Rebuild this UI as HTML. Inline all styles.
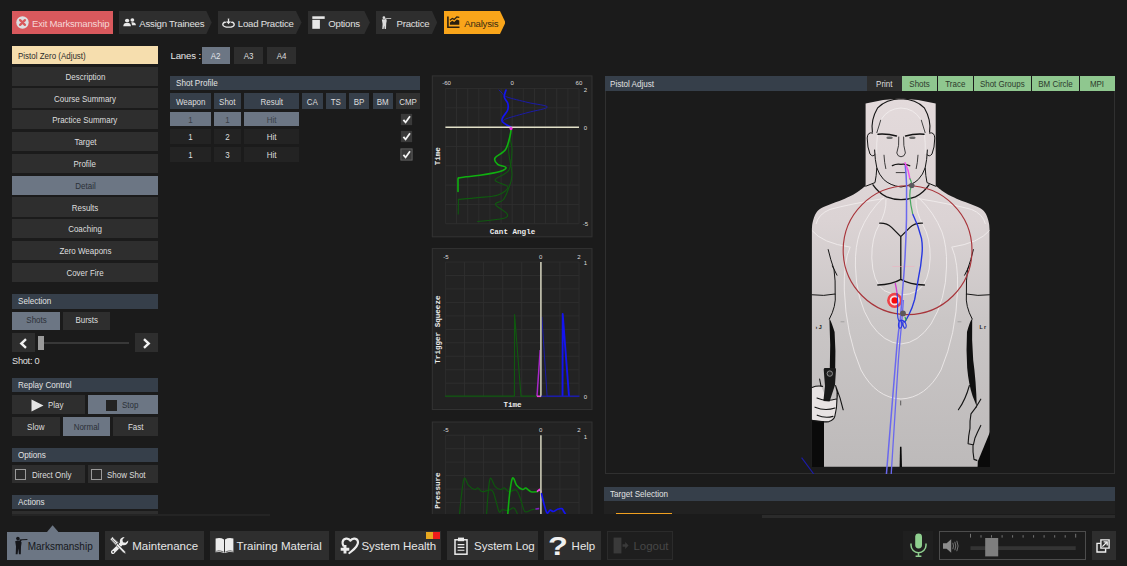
<!DOCTYPE html><html><head><meta charset="utf-8"><title>Marksmanship Analysis</title><style>
*{box-sizing:border-box;margin:0;padding:0}
html,body{width:1127px;height:566px;overflow:hidden;background:#1b1b1b;font-family:"Liberation Sans",sans-serif;color:#e0e0e0}
.a{position:absolute}
.b{position:absolute;padding-top:1.4px;background:#2e2e2e;color:#dedede;font-size:9px;display:flex;align-items:center;justify-content:center;white-space:nowrap;letter-spacing:0}
.sel{background:#6c7684;color:#2b3037}
.h{position:absolute;padding-bottom:1px;background:#363f4a;color:#e2e2e2;font-size:9.8px;display:flex;align-items:center;padding-left:5.6px;white-space:nowrap;letter-spacing:0}
.nav{position:absolute;top:11px;height:23px;background:#2e2e2e;color:#e0e0e0;font-size:9.6px;display:flex;align-items:center;white-space:nowrap;letter-spacing:-0.22px}
.g{position:absolute;padding-top:0.4px;background:#8fc78f;color:#2c3a2c;font-size:9px;display:flex;align-items:center;justify-content:center;white-space:nowrap;letter-spacing:0}
.bb{position:absolute;top:531.2px;height:28.5px;background:#2e2e2e;color:#e6e6e6;font-size:11.5px;display:flex;align-items:center;white-space:nowrap;letter-spacing:0px}
.t{display:inline-block;transform:scaleX(.885);transform-origin:50% 50%}
.tl{display:inline-block;transform:scaleX(.885);transform-origin:0 50%}
.h .t{transform:scaleX(.825);transform-origin:0 50%}
.mono{font-family:"Liberation Mono",monospace}
</style></head><body>
<div class="nav" style="left:12.0px;width:101.0px;background:#d9595d;color:#f6d6d6;"><svg class="a" style="left:4px;top:5px" width="13" height="13" viewBox="0 0 13 13"><circle cx="6.5" cy="6.5" r="6.2" fill="#dddfe2"/><path d="M4.1 4.1l4.8 4.8M8.9 4.1l-4.8 4.8" stroke="#d9595d" stroke-width="2.3" stroke-linecap="round"/></svg><span class="a" style="left:20.0px;margin-top:1.6px">Exit Marksmanship</span></div>
<div class="nav" style="left:119.0px;width:92.7px;background:#2e2e2e;color:#e0e0e0;clip-path:polygon(0 0,94.28% 0,100% 50%,94.28% 100%,0 100%);"><svg class="a" style="left:4px;top:7.2px" width="13.4" height="9.2" viewBox="0 0 14 11" preserveAspectRatio="none"><circle cx="4.3" cy="3" r="2.2" fill="#e8e8e8"/><path d="M0.3 10c0-3 1.6-4.3 4-4.3s4 1.3 4 4.3z" fill="#e8e8e8"/><circle cx="9.8" cy="2.4" r="2" fill="#e8e8e8"/><path d="M8.6 5.2c3-0.6 4.9 0.8 4.9 3.6h-4.2c0-1.5-0.2-2.6-0.7-3.6z" fill="#e8e8e8"/></svg><span class="a" style="left:20.3px;margin-top:1.6px">Assign Trainees</span></div>
<div class="nav" style="left:217.7px;width:83.9px;background:#2e2e2e;color:#e0e0e0;clip-path:polygon(0 0,93.33% 0,100% 50%,93.33% 100%,0 100%);"><svg class="a" style="left:4px;top:7px" width="13" height="10" viewBox="0 0 13 10"><ellipse cx="6.5" cy="6.4" rx="5.7" ry="2.7" fill="none" stroke="#e8e8e8" stroke-width="1.4"/><path d="M5.5 0.2h2v3h2L6.5 6.6 3.5 3.2h2z" fill="#e8e8e8" stroke="#2e2e2e" stroke-width="0.7"/></svg><span class="a" style="left:20.1px;margin-top:1.6px">Load Practice</span></div>
<div class="nav" style="left:307.8px;width:62.1px;background:#2e2e2e;color:#e0e0e0;clip-path:polygon(0 0,91.14% 0,100% 50%,91.14% 100%,0 100%);"><svg class="a" style="left:4px;top:5px" width="14" height="13" viewBox="0 0 14 13"><rect x="0.3" y="0.3" width="12.4" height="2.6" fill="#e8e8e8"/><rect x="0.3" y="3.8" width="7.6" height="9" fill="#e8e8e8"/></svg><span class="a" style="left:20.5px;margin-top:1.6px">Options</span></div>
<div class="nav" style="left:375.7px;width:61.5px;background:#2e2e2e;color:#e0e0e0;clip-path:polygon(0 0,91.54% 0,100% 50%,91.54% 100%,0 100%);"><svg class="a" style="left:5.2px;top:5px" width="11" height="13.4" viewBox="0 0 11 13.4"><circle cx="2.9" cy="1.7" r="1.35" fill="#dcdcdc"/><path d="M0.8 3.6Q2.8 2.8 4.8 3.4l1 1.2-0.6 3-0.2 5.6H3.6L3.2 9.4 2.6 13.2H1.2L1.6 8z" fill="#dcdcdc"/><path d="M3.6 2.4l2-0.2 4.6-0.1v0.7L5.8 3 4.6 4.4z" fill="#dcdcdc"/></svg><span class="a" style="left:20.8px;margin-top:1.6px">Practice</span></div>
<div class="nav" style="left:443.9px;width:61.6px;background:#f9a51a;color:#3a2c12;clip-path:polygon(0 0,91.07% 0,100% 50%,91.07% 100%,0 100%);"><svg class="a" style="left:3.6px;top:5.4px" width="13" height="12.4" viewBox="0 0 13 12.4"><path d="M0.9 0.4v10.9h11.6" fill="none" stroke="#2a2010" stroke-width="1.6"/><path d="M2.9 8.8V6.6l2.4-1.8 1.9 1.2 2.7-2.6 2.4 1v4.4z" fill="#2a2010"/><path d="M2.9 4.2l2.4-1.8 1.9 1 2.6-2.4 2.5 0.4" fill="none" stroke="#2a2010" stroke-width="1.2"/></svg><span class="a" style="left:20.4px;margin-top:1.6px">Analysis</span></div>
<div class="b" style="left:12.0px;top:46.0px;width:146.4px;height:18.2px;background:#f6deae;color:#2a2a2a;justify-content:flex-start;padding-left:5.5px"><span class="tl">Pistol Zero (Adjust)</span></div>
<div class="b" style="left:12.0px;top:66.6px;width:146.4px;height:19.2px;"><span class="t">Description</span></div>
<div class="b" style="left:12.0px;top:88.4px;width:146.4px;height:19.2px;"><span class="t">Course Summary</span></div>
<div class="b" style="left:12.0px;top:110.2px;width:146.4px;height:19.2px;"><span class="t">Practice Summary</span></div>
<div class="b" style="left:12.0px;top:132.0px;width:146.4px;height:19.2px;"><span class="t">Target</span></div>
<div class="b" style="left:12.0px;top:153.8px;width:146.4px;height:19.2px;"><span class="t">Profile</span></div>
<div class="b sel" style="left:12.0px;top:175.6px;width:146.4px;height:19.2px;"><span class="t">Detail</span></div>
<div class="b" style="left:12.0px;top:197.4px;width:146.4px;height:19.2px;"><span class="t">Results</span></div>
<div class="b" style="left:12.0px;top:219.2px;width:146.4px;height:19.2px;"><span class="t">Coaching</span></div>
<div class="b" style="left:12.0px;top:241.0px;width:146.4px;height:19.2px;"><span class="t">Zero Weapons</span></div>
<div class="b" style="left:12.0px;top:262.8px;width:146.4px;height:19.2px;"><span class="t">Cover Fire</span></div>
<div class="h" style="left:12.0px;top:294.2px;width:146.4px;height:14.6px;"><span class="t">Selection</span></div>
<div class="b sel" style="left:12.0px;top:311.9px;width:48.4px;height:18.2px;padding-top:0;padding-bottom:1px"><span class="t">Shots</span></div>
<div class="b" style="left:63.0px;top:311.9px;width:46.8px;height:18.2px;padding-top:0;padding-bottom:1px"><span class="t">Bursts</span></div>
<div class="b" style="left:12.0px;top:333.2px;width:23.0px;height:18.8px;"><svg width="9" height="11" viewBox="0 0 9 11"><path d="M7 1.2L2.3 5.5 7 9.8" fill="none" stroke="#f0f0f0" stroke-width="2.4"/></svg></div>
<div class="b" style="left:135.4px;top:333.2px;width:23.0px;height:18.8px;"><svg width="9" height="11" viewBox="0 0 9 11"><path d="M2 1.2l4.7 4.3L2 9.8" fill="none" stroke="#f0f0f0" stroke-width="2.4"/></svg></div>
<div class="a" style="left:38.0px;top:342.0px;width:91.0px;height:2.0px;background:#383838"></div>
<div class="a" style="left:38.3px;top:335.5px;width:6.2px;height:14.5px;background:#9a9a9a"></div>
<div class="a" style="left:12px;top:356px;font-size:9.2px;color:#e0e0e0;letter-spacing:-0.25px">Shot: 0</div>
<div class="h" style="left:12.0px;top:377.6px;width:146.4px;height:14.6px;"><span class="t">Replay Control</span></div>
<div class="b" style="left:12.0px;top:395.0px;width:73.2px;height:19.2px;"><svg width="13" height="13" viewBox="0 0 13 13" style="margin-right:4px"><path d="M0.5 0.5l12 6-12 6z" fill="#e6e6e6"/></svg><span class="tl">Play</span></div>
<div class="b sel" style="left:87.8px;top:395.0px;width:70.6px;height:19.2px;"><span style="display:inline-block;width:11.5px;height:11.5px;background:#232323;margin-right:4.5px"></span><span class="tl">Stop</span></div>
<div class="b" style="left:12.0px;top:417.3px;width:48.4px;height:18.8px;"><span class="t">Slow</span></div>
<div class="b sel" style="left:63.0px;top:417.3px;width:47.0px;height:18.8px;"><span class="t">Normal</span></div>
<div class="b" style="left:112.6px;top:417.3px;width:45.8px;height:18.8px;"><span class="t">Fast</span></div>
<div class="h" style="left:12.0px;top:448.2px;width:146.4px;height:14.2px;"><span class="t">Options</span></div>
<div class="b" style="left:12.0px;top:464.7px;width:73.2px;height:18.3px;justify-content:flex-start;padding-left:2.8px"><span style="display:inline-block;width:11.4px;height:11.4px;border:1px solid #9a9a9a;background:#2a2a2a;margin-right:5.5px"></span><span class="tl">Direct Only</span></div>
<div class="b" style="left:87.8px;top:464.7px;width:70.6px;height:18.3px;justify-content:flex-start;padding-left:2.8px"><span style="display:inline-block;width:11.4px;height:11.4px;border:1px solid #9a9a9a;background:#2a2a2a;margin-right:5.5px"></span><span class="tl">Show Shot</span></div>
<div class="h" style="left:12.0px;top:494.6px;width:146.4px;height:14.2px;"><span class="t">Actions</span></div>
<div class="b" style="left:12.0px;top:511.4px;width:146.4px;height:2.6px;"></div>
<div class="a" style="left:12.0px;top:513.6px;width:258.0px;height:2.0px;background:#242424"></div>
<div class="a" style="left:170.4px;top:49.6px;font-size:9.6px;color:#e6e6e6;letter-spacing:-0.1px">Lanes :</div>
<div class="b sel" style="left:201.7px;top:46.7px;width:28.6px;height:17.0px;color:#e0e4ea"><span class="t">A2</span></div>
<div class="b" style="left:233.8px;top:46.7px;width:29.6px;height:17.0px;"><span class="t">A3</span></div>
<div class="b" style="left:266.6px;top:46.7px;width:29.1px;height:17.0px;"><span class="t">A4</span></div>
<div class="h" style="left:170.2px;top:76.3px;width:250.0px;height:13.5px;"><span class="t">Shot Profile</span></div>
<div class="b" style="left:170.2px;top:92.9px;width:41.0px;height:15.9px;background:#363f4a"><span class="t">Weapon</span></div>
<div class="b" style="left:214.2px;top:92.9px;width:26.5px;height:15.9px;background:#363f4a"><span class="t">Shot</span></div>
<div class="b" style="left:243.7px;top:92.9px;width:55.4px;height:15.9px;background:#363f4a"><span class="t">Result</span></div>
<div class="b" style="left:302.1px;top:92.9px;width:20.6px;height:15.9px;background:#363f4a"><span class="t">CA</span></div>
<div class="b" style="left:326.0px;top:92.9px;width:20.0px;height:15.9px;background:#363f4a"><span class="t">TS</span></div>
<div class="b" style="left:349.0px;top:92.9px;width:20.4px;height:15.9px;background:#363f4a"><span class="t">BP</span></div>
<div class="b" style="left:372.7px;top:92.9px;width:20.3px;height:15.9px;background:#363f4a"><span class="t">BM</span></div>
<div class="b" style="left:396.0px;top:92.9px;width:24.2px;height:15.9px;background:#303030"><span class="t">CMP</span></div>
<div class="b sel" style="left:170.2px;top:111.7px;width:41.0px;height:14.4px;color:#3a4048"><span class="t">1</span></div>
<div class="b sel" style="left:214.2px;top:111.7px;width:26.5px;height:14.4px;color:#3a4048"><span class="t">1</span></div>
<div class="b sel" style="left:243.7px;top:111.7px;width:55.4px;height:14.4px;color:#3a4048"><span class="t">Hit</span></div>
<div class="a" style="left:400px;top:112.6px;width:13px;height:13px;line-height:0"><svg width="13" height="13" viewBox="0 0 13 13"><rect x="0.9" y="0.9" width="11.2" height="11.2" fill="#3a3a3a" stroke="none" stroke-width="0"/><path d="M3.4 6.8l2.2 2.6 4.4-6.2" fill="none" stroke="#f4f4f4" stroke-width="1.8"/></svg></div>
<div class="b" style="left:170.2px;top:129.4px;width:41.0px;height:14.4px;background:#232323"><span class="t">1</span></div>
<div class="b" style="left:214.2px;top:129.4px;width:26.5px;height:14.4px;background:#232323"><span class="t">2</span></div>
<div class="b" style="left:243.7px;top:129.4px;width:55.4px;height:14.4px;background:#232323"><span class="t">Hit</span></div>
<div class="a" style="left:400px;top:130.3px;width:13px;height:13px;line-height:0"><svg width="13" height="13" viewBox="0 0 13 13"><rect x="0.9" y="0.9" width="11.2" height="11.2" fill="#3a3a3a" stroke="none" stroke-width="0"/><path d="M3.4 6.8l2.2 2.6 4.4-6.2" fill="none" stroke="#f4f4f4" stroke-width="1.8"/></svg></div>
<div class="b" style="left:170.2px;top:147.2px;width:41.0px;height:14.4px;background:#232323"><span class="t">1</span></div>
<div class="b" style="left:214.2px;top:147.2px;width:26.5px;height:14.4px;background:#232323"><span class="t">3</span></div>
<div class="b" style="left:243.7px;top:147.2px;width:55.4px;height:14.4px;background:#232323"><span class="t">Hit</span></div>
<div class="a" style="left:400px;top:148.1px;width:13px;height:13px;line-height:0"><svg width="13" height="13" viewBox="0 0 13 13"><rect x="0.9" y="0.9" width="11.2" height="11.2" fill="#3a3a3a" stroke="#606060" stroke-width="1"/><path d="M3.4 6.8l2.2 2.6 4.4-6.2" fill="none" stroke="#f4f4f4" stroke-width="1.8"/></svg></div>
<svg class="a" style="left:0;top:0" width="1127" height="514.2" viewBox="0 0 1127 514.2"><rect x="432.3" y="75.9" width="159.7" height="160.9" fill="#222222" stroke="#333333" stroke-width="1"/><rect x="445.4" y="88.5" width="133.60000000000002" height="135.2" fill="#232323"/><line x1="445.4" y1="88.5" x2="445.4" y2="223.7" stroke="#2f2f2f" stroke-width="0.9"/><line x1="456.5" y1="88.5" x2="456.5" y2="223.7" stroke="#2f2f2f" stroke-width="0.9"/><line x1="467.7" y1="88.5" x2="467.7" y2="223.7" stroke="#2f2f2f" stroke-width="0.9"/><line x1="478.8" y1="88.5" x2="478.8" y2="223.7" stroke="#2f2f2f" stroke-width="0.9"/><line x1="489.9" y1="88.5" x2="489.9" y2="223.7" stroke="#2f2f2f" stroke-width="0.9"/><line x1="501.1" y1="88.5" x2="501.1" y2="223.7" stroke="#2f2f2f" stroke-width="0.9"/><line x1="512.2" y1="88.5" x2="512.2" y2="223.7" stroke="#2f2f2f" stroke-width="0.9"/><line x1="523.3" y1="88.5" x2="523.3" y2="223.7" stroke="#2f2f2f" stroke-width="0.9"/><line x1="534.5" y1="88.5" x2="534.5" y2="223.7" stroke="#2f2f2f" stroke-width="0.9"/><line x1="545.6" y1="88.5" x2="545.6" y2="223.7" stroke="#2f2f2f" stroke-width="0.9"/><line x1="556.7" y1="88.5" x2="556.7" y2="223.7" stroke="#2f2f2f" stroke-width="0.9"/><line x1="567.9" y1="88.5" x2="567.9" y2="223.7" stroke="#2f2f2f" stroke-width="0.9"/><line x1="579.0" y1="88.5" x2="579.0" y2="223.7" stroke="#2f2f2f" stroke-width="0.9"/><line x1="445.4" y1="88.5" x2="579.0" y2="88.5" stroke="#2f2f2f" stroke-width="0.9"/><line x1="445.4" y1="107.8" x2="579.0" y2="107.8" stroke="#2f2f2f" stroke-width="0.9"/><line x1="445.4" y1="127.1" x2="579.0" y2="127.1" stroke="#2f2f2f" stroke-width="0.9"/><line x1="445.4" y1="146.4" x2="579.0" y2="146.4" stroke="#2f2f2f" stroke-width="0.9"/><line x1="445.4" y1="165.7" x2="579.0" y2="165.7" stroke="#2f2f2f" stroke-width="0.9"/><line x1="445.4" y1="185.1" x2="579.0" y2="185.1" stroke="#2f2f2f" stroke-width="0.9"/><line x1="445.4" y1="204.4" x2="579.0" y2="204.4" stroke="#2f2f2f" stroke-width="0.9"/><line x1="445.4" y1="223.7" x2="579.0" y2="223.7" stroke="#2f2f2f" stroke-width="0.9"/><text x="446.6" y="85.2" font-size="6.1" fill="#dcdcdc" text-anchor="middle" font-family="Liberation Sans">-60</text><text x="512.2" y="85.2" font-size="6.1" fill="#dcdcdc" text-anchor="middle" font-family="Liberation Sans">0</text><text x="579" y="85.2" font-size="6.1" fill="#dcdcdc" text-anchor="middle" font-family="Liberation Sans">60</text><text x="585.5" y="91.8" font-size="6.1" fill="#dcdcdc" text-anchor="middle" font-family="Liberation Sans">2</text><text x="585.5" y="130" font-size="6.1" fill="#dcdcdc" text-anchor="middle" font-family="Liberation Sans">0</text><text x="585.5" y="226" font-size="6.1" fill="#dcdcdc" text-anchor="middle" font-family="Liberation Sans">-5</text><text x="440.3" y="156.2" font-size="7.6" font-weight="bold" fill="#ececec" text-anchor="middle" font-family="Liberation Mono" transform="rotate(-90 440.3 156.2)">Time</text><text x="512.5" y="234.4" font-size="7.6" font-weight="bold" fill="#ececec" text-anchor="middle" font-family="Liberation Mono">Cant Angle</text><path d="M511.0 130.0 C510.9 131.7 510.3 136.7 510.5 140.0 C510.7 143.3 512.2 145.0 512.0 150.0 C511.8 155.0 511.8 165.0 509.0 170.0 C506.2 175.0 495.2 177.2 495.0 180.0 C494.8 182.8 507.5 184.5 508.0 187.0 C508.5 189.5 503.0 193.2 498.0 195.0 C493.0 196.8 484.6 196.9 478.0 197.6 C471.4 198.3 461.7 199.1 458.4 199.4" fill="none" stroke="#0f5a0f" stroke-width="1.1" stroke-linejoin="round" stroke-linecap="round" /><path d="M458.4 199.4 L458.2 214.0" fill="none" stroke="#0f5a0f" stroke-width="1.1" stroke-linejoin="round" stroke-linecap="round" /><path d="M511.0 130.0 C510.6 133.3 508.3 142.5 508.5 150.0 C508.7 157.5 512.1 168.3 512.0 175.0 C511.9 181.7 509.5 185.8 508.0 190.0 C506.5 194.2 505.1 197.6 503.0 200.0 C500.9 202.4 494.8 202.2 495.5 204.5 C496.2 206.8 505.8 211.5 507.0 213.8 C508.2 216.1 507.9 217.2 503.0 218.5 C498.1 219.8 481.8 221.0 477.6 221.5" fill="none" stroke="#0f5a0f" stroke-width="1.1" stroke-linejoin="round" stroke-linecap="round" /><path d="M499.0 90.0 C499.5 90.5 500.7 91.8 502.0 93.0 C503.3 94.2 502.7 95.4 507.0 97.0 C511.3 98.6 521.2 100.8 528.0 102.5 C534.8 104.2 547.5 105.3 547.5 107.0 C547.5 108.7 534.8 110.6 528.0 112.5 C521.2 114.4 511.3 116.9 507.0 118.5 C502.7 120.1 502.8 121.4 502.0 122.0" fill="none" stroke="#1a1aa8" stroke-width="1.0" stroke-linejoin="round" stroke-linecap="round" /><path d="M506.0 90.0 C505.7 91.2 504.0 94.8 504.3 97.0 C504.6 99.2 507.2 101.2 507.8 103.4 C508.4 105.6 508.4 107.9 507.6 110.2 C506.8 112.5 503.9 115.2 503.0 117.0 C502.1 118.8 501.5 119.8 502.0 121.0 C502.5 122.2 504.5 123.5 506.0 124.5 C507.5 125.5 510.2 126.6 511.0 127.0" fill="none" stroke="#1414f0" stroke-width="1.7" stroke-linejoin="round" stroke-linecap="round" /><line x1="445.4" y1="127.3" x2="579.0" y2="127.3" stroke="#e2e0c8" stroke-width="1.5"/><path d="M511.0 130.0 C510.8 131.0 510.9 132.7 510.0 136.0 C509.1 139.3 507.9 146.1 505.4 149.8 C502.9 153.5 496.3 155.6 495.0 158.0 C493.7 160.4 495.9 162.7 497.7 164.3 C499.5 165.9 505.6 166.2 506.0 167.4 C506.4 168.6 504.3 170.2 500.0 171.5 C495.7 172.8 485.7 174.4 480.0 175.3 C474.3 176.2 469.6 176.4 466.0 176.8 C462.4 177.2 459.7 177.8 458.4 178.0" fill="none" stroke="#10b010" stroke-width="1.6" stroke-linejoin="round" stroke-linecap="round" /><path d="M458.4 178.0 L458.0 179.0 L458.0 191.5" fill="none" stroke="#10b010" stroke-width="1.6" stroke-linejoin="round" stroke-linecap="round" /><circle cx="511" cy="128.6" r="1.6" fill="#f030e0"/><rect x="432.3" y="248.6" width="159.7" height="160.9" fill="#222222" stroke="#333333" stroke-width="1"/><rect x="445.4" y="262" width="133.60000000000002" height="134.7" fill="#232323"/><line x1="445.4" y1="262" x2="445.4" y2="396.7" stroke="#2f2f2f" stroke-width="0.9"/><line x1="464.5" y1="262" x2="464.5" y2="396.7" stroke="#2f2f2f" stroke-width="0.9"/><line x1="483.6" y1="262" x2="483.6" y2="396.7" stroke="#2f2f2f" stroke-width="0.9"/><line x1="502.7" y1="262" x2="502.7" y2="396.7" stroke="#2f2f2f" stroke-width="0.9"/><line x1="521.7" y1="262" x2="521.7" y2="396.7" stroke="#2f2f2f" stroke-width="0.9"/><line x1="540.8" y1="262" x2="540.8" y2="396.7" stroke="#2f2f2f" stroke-width="0.9"/><line x1="559.9" y1="262" x2="559.9" y2="396.7" stroke="#2f2f2f" stroke-width="0.9"/><line x1="579.0" y1="262" x2="579.0" y2="396.7" stroke="#2f2f2f" stroke-width="0.9"/><line x1="445.4" y1="262.0" x2="579.0" y2="262.0" stroke="#2f2f2f" stroke-width="0.9"/><line x1="445.4" y1="275.5" x2="579.0" y2="275.5" stroke="#2f2f2f" stroke-width="0.9"/><line x1="445.4" y1="288.9" x2="579.0" y2="288.9" stroke="#2f2f2f" stroke-width="0.9"/><line x1="445.4" y1="302.4" x2="579.0" y2="302.4" stroke="#2f2f2f" stroke-width="0.9"/><line x1="445.4" y1="315.9" x2="579.0" y2="315.9" stroke="#2f2f2f" stroke-width="0.9"/><line x1="445.4" y1="329.4" x2="579.0" y2="329.4" stroke="#2f2f2f" stroke-width="0.9"/><line x1="445.4" y1="342.8" x2="579.0" y2="342.8" stroke="#2f2f2f" stroke-width="0.9"/><line x1="445.4" y1="356.3" x2="579.0" y2="356.3" stroke="#2f2f2f" stroke-width="0.9"/><line x1="445.4" y1="369.8" x2="579.0" y2="369.8" stroke="#2f2f2f" stroke-width="0.9"/><line x1="445.4" y1="383.2" x2="579.0" y2="383.2" stroke="#2f2f2f" stroke-width="0.9"/><line x1="445.4" y1="396.7" x2="579.0" y2="396.7" stroke="#2f2f2f" stroke-width="0.9"/><text x="446" y="258.8" font-size="6.1" fill="#dcdcdc" text-anchor="middle" font-family="Liberation Sans">-5</text><text x="540.8" y="258.8" font-size="6.1" fill="#dcdcdc" text-anchor="middle" font-family="Liberation Sans">0</text><text x="579" y="258.8" font-size="6.1" fill="#dcdcdc" text-anchor="middle" font-family="Liberation Sans">2</text><text x="585.5" y="265.5" font-size="6.1" fill="#dcdcdc" text-anchor="middle" font-family="Liberation Sans">1</text><text x="585.5" y="399" font-size="6.1" fill="#dcdcdc" text-anchor="middle" font-family="Liberation Sans">0</text><text x="440.3" y="329.6" font-size="7.6" font-weight="bold" fill="#ececec" text-anchor="middle" font-family="Liberation Mono" transform="rotate(-90 440.3 329.6)">Trigger Squeeze</text><text x="512.5" y="407.5" font-size="7.6" font-weight="bold" fill="#ececec" text-anchor="middle" font-family="Liberation Mono">Time</text><path d="M445.4 396.1 L514.4 396.1 L514.6 314.6 L521.0 396.1 L540.0 396.1" fill="none" stroke="#0f5a0f" stroke-width="1.1" stroke-linejoin="round" stroke-linecap="round" /><path d="M541.9 317.2 L547.1 396.2 L579.0 396.2" fill="none" stroke="#1a1aa8" stroke-width="1.0" stroke-linejoin="round" stroke-linecap="round" /><path d="M537 396.3L540.2 350" fill="none" stroke="#a828c8" stroke-width="1.5"/><path d="M537 396.3h4" stroke="#f040e0" stroke-width="1.6"/><line x1="540.9" y1="262" x2="540.9" y2="396.7" stroke="#c2c0ae" stroke-width="1.7"/><path d="M562.5 396.3L562.7 314 569 396.3" fill="none" stroke="#1414f0" stroke-width="1.9" stroke-linejoin="round"/><path d="M541.5 396.2 L579.0 396.2" fill="none" stroke="#1c1cb8" stroke-width="1.0" stroke-linejoin="round" stroke-linecap="round" /><rect x="432.3" y="422" width="159.7" height="160.9" fill="#222222" stroke="#333333" stroke-width="1"/><rect x="445.4" y="435.2" width="133.60000000000002" height="134.7" fill="#232323"/><line x1="445.4" y1="435.2" x2="445.4" y2="569.9" stroke="#2f2f2f" stroke-width="0.9"/><line x1="464.5" y1="435.2" x2="464.5" y2="569.9" stroke="#2f2f2f" stroke-width="0.9"/><line x1="483.6" y1="435.2" x2="483.6" y2="569.9" stroke="#2f2f2f" stroke-width="0.9"/><line x1="502.7" y1="435.2" x2="502.7" y2="569.9" stroke="#2f2f2f" stroke-width="0.9"/><line x1="521.7" y1="435.2" x2="521.7" y2="569.9" stroke="#2f2f2f" stroke-width="0.9"/><line x1="540.8" y1="435.2" x2="540.8" y2="569.9" stroke="#2f2f2f" stroke-width="0.9"/><line x1="559.9" y1="435.2" x2="559.9" y2="569.9" stroke="#2f2f2f" stroke-width="0.9"/><line x1="579.0" y1="435.2" x2="579.0" y2="569.9" stroke="#2f2f2f" stroke-width="0.9"/><line x1="445.4" y1="435.2" x2="579.0" y2="435.2" stroke="#2f2f2f" stroke-width="0.9"/><line x1="445.4" y1="448.7" x2="579.0" y2="448.7" stroke="#2f2f2f" stroke-width="0.9"/><line x1="445.4" y1="462.1" x2="579.0" y2="462.1" stroke="#2f2f2f" stroke-width="0.9"/><line x1="445.4" y1="475.6" x2="579.0" y2="475.6" stroke="#2f2f2f" stroke-width="0.9"/><line x1="445.4" y1="489.1" x2="579.0" y2="489.1" stroke="#2f2f2f" stroke-width="0.9"/><line x1="445.4" y1="502.6" x2="579.0" y2="502.6" stroke="#2f2f2f" stroke-width="0.9"/><line x1="445.4" y1="516.0" x2="579.0" y2="516.0" stroke="#2f2f2f" stroke-width="0.9"/><line x1="445.4" y1="529.5" x2="579.0" y2="529.5" stroke="#2f2f2f" stroke-width="0.9"/><line x1="445.4" y1="543.0" x2="579.0" y2="543.0" stroke="#2f2f2f" stroke-width="0.9"/><line x1="445.4" y1="556.4" x2="579.0" y2="556.4" stroke="#2f2f2f" stroke-width="0.9"/><line x1="445.4" y1="569.9" x2="579.0" y2="569.9" stroke="#2f2f2f" stroke-width="0.9"/><text x="446" y="432" font-size="6.1" fill="#dcdcdc" text-anchor="middle" font-family="Liberation Sans">-5</text><text x="540.8" y="432" font-size="6.1" fill="#dcdcdc" text-anchor="middle" font-family="Liberation Sans">0</text><text x="579" y="432" font-size="6.1" fill="#dcdcdc" text-anchor="middle" font-family="Liberation Sans">2</text><text x="585.5" y="438.7" font-size="6.1" fill="#dcdcdc" text-anchor="middle" font-family="Liberation Sans">1</text><text x="440.3" y="490.6" font-size="7.6" font-weight="bold" fill="#ececec" text-anchor="middle" font-family="Liberation Mono" transform="rotate(-90 440.3 490.6)">Pressure</text><path d="M459.4 515.0 C459.8 511.7 460.7 501.1 461.5 495.0 C462.3 488.9 463.0 479.9 464.2 478.3 C465.4 476.7 466.7 483.4 468.5 485.3 C470.3 487.2 473.3 489.1 474.9 489.5 C476.5 489.9 476.8 487.6 478.0 488.0 C479.2 488.4 480.0 491.3 482.3 491.7 C484.6 492.1 489.5 488.6 491.8 490.2 C494.1 491.8 494.8 497.6 496.0 501.2 C497.2 504.8 498.1 510.4 499.2 511.8 C500.3 513.2 500.9 509.9 502.4 509.7 C503.9 509.5 506.1 510.8 508.0 510.5 C509.9 510.2 512.3 507.1 514.0 508.0 C515.7 508.9 517.6 514.7 518.3 516.0" fill="none" stroke="#0e560e" stroke-width="1.2" stroke-linejoin="round" stroke-linecap="round" /><path d="M486.5 515.0 C486.8 511.7 487.4 501.1 488.0 495.0 C488.6 488.9 489.1 479.7 490.3 478.3 C491.5 476.9 493.3 484.5 495.0 486.4 C496.7 488.3 498.7 489.2 500.3 489.5 C501.9 489.8 503.1 487.6 504.5 488.0 C505.9 488.4 506.9 491.3 508.8 491.7 C510.8 492.1 514.2 489.0 516.2 490.2 C518.2 491.4 519.1 495.5 520.5 499.0 C521.9 502.5 523.0 509.6 524.7 511.4 C526.5 513.2 529.1 510.4 531.0 510.0 C532.9 509.6 535.2 509.2 536.0 509.0" fill="none" stroke="#0e560e" stroke-width="1.2" stroke-linejoin="round" stroke-linecap="round" /><path d="M536.0 509.0 L538.5 508.6" fill="none" stroke="#8020c0" stroke-width="1.6" stroke-linejoin="round" stroke-linecap="round" /><path d="M507.7 515.0 C508.0 511.7 508.8 500.9 509.5 495.0 C510.2 489.1 511.2 482.0 512.0 479.3 C512.8 476.6 513.2 478.0 514.0 479.0 C514.8 480.0 515.2 483.6 516.6 485.3 C518.0 487.1 521.1 489.1 522.6 489.5 C524.1 489.9 524.4 487.6 525.8 488.0 C527.2 488.4 529.0 491.1 531.0 491.7 C533.0 492.3 536.4 491.7 537.5 491.7" fill="none" stroke="#10ac10" stroke-width="1.6" stroke-linejoin="round" stroke-linecap="round" /><path d="M537.5 491.2 L539.6 489.4 L541.0 491.5" fill="none" stroke="#f040e0" stroke-width="1.7" stroke-linejoin="round" stroke-linecap="round" /><line x1="540.9" y1="435.2" x2="540.9" y2="515" stroke="#c2c0ae" stroke-width="1.7"/><path d="M541.6 493.8 C542.0 495.5 543.1 500.8 544.0 504.0 C544.9 507.2 546.0 511.9 547.0 512.9 C548.0 513.9 549.2 510.3 550.2 510.1 C551.2 509.9 552.1 511.6 553.3 511.5 C554.5 511.4 556.2 509.8 557.6 509.3 C559.0 508.8 560.8 508.3 561.8 508.6 C562.8 508.9 562.8 509.9 563.5 511.0 C564.2 512.1 565.6 514.3 566.0 515.0" fill="none" stroke="#1414f0" stroke-width="1.7" stroke-linejoin="round" stroke-linecap="round" /></svg>
<div class="h" style="left:604.7px;top:76.0px;width:262.0px;height:15.4px;"><span class="t">Pistol Adjust</span></div>
<div class="b" style="left:866.7px;top:76.0px;width:35.0px;height:15.4px;background:#2c2c2c"><span class="t">Print</span></div>
<div class="g" style="left:902.2px;top:76.0px;width:35.0px;height:15.4px;"><span class="t">Shots</span></div>
<div class="g" style="left:938.0px;top:76.0px;width:34.9px;height:15.4px;"><span class="t">Trace</span></div>
<div class="g" style="left:973.7px;top:76.0px;width:57.4px;height:15.4px;"><span class="t">Shot Groups</span></div>
<div class="g" style="left:1031.9px;top:76.0px;width:47.1px;height:15.4px;"><span class="t">BM Circle</span></div>
<div class="g" style="left:1079.8px;top:76.0px;width:35.2px;height:15.4px;"><span class="t">MPI</span></div>
<div class="a" style="left:604.7px;top:91.4px;width:510.3px;height:383.0px;border:1px solid #303030;border-top:none"></div>
<svg class="a" style="left:0;top:0" width="1127" height="474.4" viewBox="0 0 1127 474.4"><defs><linearGradient id="pg" x1="0" y1="0" x2="0" y2="1"><stop offset="0" stop-color="#e3dadb"/><stop offset="0.33" stop-color="#dbd3d4"/><stop offset="0.6" stop-color="#cac6c6"/><stop offset="1" stop-color="#bdbaba"/></linearGradient></defs><path d="M865.6 103.4 Q883 99.4 900.6 98.6 Q918 99.4 935.7 103.4 L935.7 186 C937.2 187.0 941.2 190.2 943.9 192.0 C946.6 193.8 949.0 195.1 951.9 196.6 C954.8 198.1 958.3 199.6 961.4 200.8 C964.5 202.0 967.3 202.8 970.4 204.0 C973.5 205.2 977.5 206.6 979.9 208.0 C982.3 209.4 983.6 210.6 984.8 212.2 C986.1 213.8 986.7 215.5 987.4 217.4 C988.1 219.3 988.7 221.5 989.0 223.4 C989.4 225.3 989.4 228.1 989.5 229.0 L989.5 466.8 L811.9 466.8 L811.9 229 C812.0 228.1 812.0 225.3 812.4 223.4 C812.8 221.5 813.3 219.3 814.0 217.4 C814.7 215.5 815.4 213.8 816.6 212.2 C817.9 210.6 819.1 209.4 821.5 208.0 C823.9 206.6 827.9 205.2 831.0 204.0 C834.1 202.8 836.9 202.0 840.0 200.8 C843.1 199.6 846.6 198.1 849.5 196.6 C852.4 195.1 854.8 193.8 857.5 192.0 C860.2 190.2 864.2 187.0 865.6 186.0 Z" fill="url(#pg)"/><path d="M876.8 154 Q876 130 881.6 119 Q888 108.6 901 108 Q914 108.6 920.4 119 Q926 130 925.2 154" stroke="#f4f0f0" fill="none" stroke-width="0.95" opacity="0.8"/><path d="M886 199 Q886.5 212 879 225 Q871.5 238 871.8 258 Q872.5 282 884 290.5 Q892 295 901 295 Q910 295 918 290.5 Q929.5 282 930.2 258 Q930.5 238 923 225 Q915.5 212 916 199" stroke="#f4f0f0" fill="none" stroke-width="0.95" opacity="0.8"/><path d="M883.6 197.5 Q868 212 860 232 Q855 246 855.4 266 Q856 300 871 324 Q884 343 901 344 Q918 343 931 324 Q946 300 946.6 266 Q947 246 942 232 Q934 212 918.4 197.5" stroke="#f4f0f0" fill="none" stroke-width="0.95" opacity="0.8"/><path d="M850 247.5 Q843.5 262 844.3 290 Q846 335 861 370 Q876 398 901 399 Q926 398 941 370 Q956 335 957.6 290 Q958.4 262 952 247.5" stroke="#f4f0f0" fill="none" stroke-width="0.95" opacity="0.8"/><path d="M812 230.5 Q822 243 850.5 247.2 M989.5 230.5 Q979 243 951.5 247.2" stroke="#f4f0f0" fill="none" stroke-width="0.95" opacity="0.8"/><path d="M816 224 Q818.5 214 830 209.4 Q850 204 884 198.5 M985.4 224 Q983 214 971.4 209.4 Q951 204 917.8 198.5" stroke="#f4f0f0" fill="none" stroke-width="0.95" opacity="0.8"/><path d="M872.4 132 Q870.6 120 877.7 107.8 Q886 99.4 901 98.8 Q916 99.4 924.3 107.8 Q931.4 120 929.6 132" stroke="#141414" fill="none" stroke-linecap="round" stroke-linejoin="round" stroke-width="1.1"/><path d="M872.6 133 Q867.6 131.6 867.2 138 Q867.4 148 870 154 Q872.6 157.4 875 154.6 M929.4 133 Q934.4 131.6 934.8 138 Q934.6 148 932 154 Q929.4 157.4 927 154.6" stroke="#141414" fill="none" stroke-linecap="round" stroke-linejoin="round" stroke-width="1"/><path d="M874.6 150 Q875 160 876.8 167.7 Q879 174.6 883.6 179.4 Q890 185.6 901 187 Q912 185.6 918.4 179.4 Q923 174.6 925.2 167.7 Q927 160 927.4 150" stroke="#141414" fill="none" stroke-linecap="round" stroke-linejoin="round" stroke-width="1"/><path d="M880.7 120.2 L876.9 132.6 M921.3 120.2 L925.1 132.6" stroke="#141414" fill="none" stroke-linecap="round" stroke-linejoin="round" stroke-width="0.8"/><path d="M878 134.2 Q888 133.6 896.4 135.9 M924 134.2 Q914 133.6 905.6 135.9" stroke="#141414" fill="none" stroke-linecap="round" stroke-linejoin="round" stroke-width="1.6"/><ellipse cx="889.6" cy="137.8" rx="3.2" ry="1.3" fill="#6a6a6a"/><ellipse cx="912.4" cy="137.8" rx="3.2" ry="1.3" fill="#6a6a6a"/><path d="M898.8 137 Q899.4 146 896.8 153 Q897.6 156.6 901 156.8 Q904.6 156.6 905.4 153 Q903.2 146 903.6 137" stroke="#141414" fill="none" stroke-linecap="round" stroke-linejoin="round" stroke-width="0.8"/><path d="M884 155.2 Q884.4 163 885.8 168.6 M918 155.2 Q917.6 163 916.2 168.6" stroke="#141414" fill="none" stroke-linecap="round" stroke-linejoin="round" stroke-width="0.8"/><path d="M892.4 165.6 Q896.6 163.4 901 164.4 Q905.4 163.4 909.8 165.8" stroke="#141414" fill="none" stroke-linecap="round" stroke-linejoin="round" stroke-width="1.3"/><path d="M896.2 172.6 L905.8 172.6" stroke="#141414" fill="none" stroke-linecap="round" stroke-linejoin="round" stroke-width="0.8"/><path d="M876.8 168 Q876.4 176 875 182.6 L865.8 186.2 M925.2 168 Q925.6 176 927 182.6 L935.6 186.2" stroke="#141414" fill="none" stroke-linecap="round" stroke-linejoin="round" stroke-width="1"/><path d="M873 184.8 Q878.6 193 886.6 196.8 Q893 199.4 901 199.6 Q909 199.4 915.4 196.8 Q923.4 193 929 184.8" stroke="#141414" fill="none" stroke-linecap="round" stroke-linejoin="round" stroke-width="1.3"/><path d="M879.7 223.2 Q887 223 891.6 227.4 L900.8 236.6 L910 227.4 Q914.6 223 922.4 223.2 M900.8 236.6 L900.8 279.4 M877.8 285 Q892 284.6 900.8 279.4 Q909.6 284.6 924.4 285" stroke="#141414" fill="none" stroke-linecap="round" stroke-linejoin="round" stroke-width="1.3"/><path d="M828.2 249.6 Q830.6 260 834 269.4 Q835.6 280 835.2 294 M832.4 266 L837 275.2 M812 294.8 Q824 296.4 835.2 294 Q836.4 306 829.4 319" stroke="#141414" fill="none" stroke-linecap="round" stroke-linejoin="round" stroke-width="1"/><path d="M973.4 249.6 Q971 260 967.6 269.4 Q966 280 966.4 294 M969.2 266 L964.6 275.2 M989.5 294.8 Q977.6 296.4 966.4 294 Q965.2 306 972.2 319" stroke="#141414" fill="none" stroke-linecap="round" stroke-linejoin="round" stroke-width="1"/><path d="M829.4 318.4 Q831.6 322 834.6 332 Q835.9 350 835.2 370 L829.8 370 Q830.8 345 829.4 318.4Z" fill="#101010"/><path d="M972.2 318.4 Q969.6 322 967 332 Q966 350 967.2 368 Q968.6 384 972.6 396 L976.8 406.4 Q976 380 973.2 360 Q971.6 340 972.2 318.4Z" fill="#101010"/><path d="M969.4 385.5 Q965.4 400 958.4 409.8 M980.8 399.2 L975.9 407.4" stroke="#141414" fill="none" stroke-linecap="round" stroke-linejoin="round" stroke-width="1.1"/><path d="M975.9 407.4 L971 413.8 Q969.6 421 970 428.4 Q968.4 436 968.1 443.8 L973 444.8 Q972.6 452 974 459.4 L976.9 460.4 M980.8 425.4 Q977.4 432 975 438 L973.4 444.8" stroke="#141414" fill="none" stroke-linecap="round" stroke-linejoin="round" stroke-width="1.1"/><path d="M990 432 L990 467 L977.6 467 L977.8 461.4 Z" fill="#0a0a0a"/><rect x="811.6" y="420" width="12.4" height="47" fill="#0a0a0a"/><path d="M812 387.6 L821 385.8 L823.6 392 L829 401 L835.6 398 L837 408 L834.6 417 L829 421.4 L812 420.2Z" fill="#e8e3e3"/><path d="M823.7 369.4 Q823.7 368 825.2 368 L834.6 368 Q836 368 836 369.4 L835 385 L829.6 401.6 L823.4 401 L825 386 Z" fill="#1a1a1a"/><circle cx="829.8" cy="373.6" r="2.7" fill="#2c2c2c" stroke="#8e8e8e" stroke-width="1"/><path d="M812 387.5 Q817 385.4 822.6 386.4 M819.6 379 L821 386 M817 398 Q826 402 836 399 M815 407.2 Q825 411.4 835 408 M817.2 415.2 Q825 418.6 833 416.4 M812 420.4 Q821 422.6 829 421.6 Q834 420 834.8 416.4 Q837 408 837 399 Q838 392 835.6 385.6 Q840.6 398 843.2 409.8" stroke="#141414" fill="none" stroke-linecap="round" stroke-linejoin="round" stroke-width="1.1"/><path d="M900.7 401 L900.7 405" stroke="#141414" fill="none" stroke-linecap="round" stroke-linejoin="round" stroke-width="0.6"/><path d="M900 446.8 L901.5 446.8 L902 467 L899.6 467 Z" fill="#0a0a0a"/><path d="M840.6 321.8 L844.4 321.8 M957.6 321.8 L961.4 321.8" stroke="#8a8888" stroke-width="0.6"/><text x="815.4" y="329.4" font-size="5.4" fill="#222" font-family="Liberation Sans" font-weight="bold">&#8250; J</text><text x="979.4" y="329.4" font-size="5.4" fill="#222" font-family="Liberation Sans" font-weight="bold">L r</text><circle cx="907.6" cy="250.2" r="64.4" fill="none" stroke="#a8343a" stroke-width="1.15"/><circle cx="894.7" cy="300.4" r="7.6" fill="#ee4248"/><circle cx="894.7" cy="300.4" r="5" fill="#f6e2e2"/><circle cx="894.7" cy="300.4" r="3.2" fill="#f80808"/><path d="M892.3 266.5 L914.7 266.5" stroke="#f0b0c0" stroke-width="0.7" opacity="0.8"/><path d="M905.2 164.8 Q906.4 175 906.6 186 L906.5 219 Q906 240 905 257.7 Q904 275 902.6 290 Q901.6 304 900.4 318 Q898.6 330 897 345 L886.4 474.4" fill="none" stroke="#6a68ee" stroke-width="1.5"/><path d="M903.4 300 Q902.6 312 901.6 324 Q900 340 898.4 360 L891.2 474.4" fill="none" stroke="#6a68ee" stroke-width="1.3"/><path d="M905 162.9 Q908.6 170 909.8 178.4" fill="none" stroke="#f050e8" stroke-width="1.5" stroke-linecap="round"/><path d="M909.8 178.4 Q911.4 181 911.8 185.2 Q909.4 190 909.8 195.5 Q910.6 206 912.7 214" fill="none" stroke="#48a860" stroke-width="1.2"/><path d="M912.7 214 Q918.6 226 921.5 238.3 Q922.8 246 922 253.9 Q921 266 918.6 277.2 Q916.6 289 914.7 299.4 Q912.4 308 908.8 315 Q906.6 319 904.6 322.4" fill="none" stroke="#2838e0" stroke-width="1.4"/><path d="M895.2 283 Q896.4 288 897 293" fill="none" stroke="#d040d0" stroke-width="1.3"/><path d="M897 293 Q898.4 303 897.4 313 Q897.6 318 899 321.6 Q897.6 326.6 899.6 328.2 Q902 328.4 902 324 Q901.4 320 899.4 320.6 M899 321.6 Q901 319.4 902.6 320.6 Q905.4 321.4 906.2 325.4 Q906.2 328.8 904.4 328.2 Q902.6 326 903 322 Q903.4 319.6 904.6 322.4" fill="none" stroke="#2838e0" stroke-width="1.1"/><path d="M905 317 L906.2 320.6" stroke="#30b040" stroke-width="1.2"/><path d="M801.6 457.6 L814 474.4" stroke="#1c1ca8" stroke-width="1.1"/><circle cx="911.8" cy="185.4" r="2.7" fill="#5a5a5e"/><circle cx="903" cy="313.4" r="2.9" fill="#5c5858"/></svg>
<div class="h" style="left:604.2px;top:487.0px;width:510.8px;height:13.9px;"><span class="t">Target Selection</span></div>
<div class="a" style="left:604.2px;top:500.9px;width:510.8px;height:13.3px;background:#212121"></div>
<div class="a" style="left:616.0px;top:512.8px;width:55.6px;height:1.3px;background:#f0a020"></div>
<div class="a" style="left:761.8px;top:514.6px;width:353.2px;height:3.2px;background:#2b2b2b"></div>
<svg class="a" style="left:46px;top:524px" width="14" height="8" viewBox="0 0 14 8"><path d="M1 8L6.6 1.2 12.4 8z" fill="#6c7684"/></svg>
<div class="bb" style="left:6.6px;width:92.1px;background:#6c7684;color:#16181c;top:531.8px;height:27.9px"><svg class="a" style="left:6px;top:4.6px" width="16" height="19" viewBox="0 0 16 19"><circle cx="4.9" cy="2.6" r="1.8" fill="#15161a"/><path d="M2.2 5.2Q4.8 4 7.6 5l1 1.4-0.6 4.4-0.2 7.4H5.9L5.3 12.6 4.6 18.2H2.7L3 10.4z" fill="#15161a"/><path d="M6 3.6l2.6-0.3 5.8-0.2v0.8l-5.6 0.3L7.4 6z" fill="#15161a"/></svg><span class="a" style="left:21.1px;margin-top:1px;font-size:10px;letter-spacing:0;margin-top:0.8px">Marksmanship</span></div>
<div class="bb" style="left:104.9px;width:99.0px;"><svg class="a" style="left:4.2px;top:5px" width="20" height="19" viewBox="0 0 20 19"><path d="M15.6 0.9a4.4 4.4 0 0 0-4.6 5.6L3 14.3a2 2 0 1 0 2.7 2.7l8-7.9a4.4 4.4 0 0 0 5.5-4.7l-2.7 2.4-2.5-0.6-0.6-2.5z" fill="#ececec"/><circle cx="4.2" cy="15.8" r="0.9" fill="#2e2e2e"/><path d="M1 3.2L3.6 0.8l6.2 5.6-2.9 3z" fill="#ececec" stroke="#2e2e2e" stroke-width="0.7"/><path d="M2.8 3.2l4.6 4.4M4.2 1.9l4.6 4.4" stroke="#2e2e2e" stroke-width="0.7"/><path d="M8.6 7.6l7.4 7.6 1.2 2.8-2.8-1.2L7 9.2z" fill="#ececec" stroke="#2e2e2e" stroke-width="0.6"/></svg><span class="a" style="left:27.4px;margin-top:1px;">Maintenance</span></div>
<div class="bb" style="left:210.3px;width:118.4px;"><svg class="a" style="left:5px;top:6px" width="19" height="16" viewBox="0 0 19 16"><path d="M0.6 1.6Q5 0 9 2.4V15Q5 12.8 0.6 14z" fill="#ececec"/><path d="M18.4 1.6Q14 0 10 2.4V15Q14 12.8 18.4 14z" fill="#ececec"/><path d="M0.3 14.8Q5 13.6 9.5 15.8Q14 13.6 18.7 14.8" fill="none" stroke="#cfcfcf" stroke-width="0.9"/></svg><span class="a" style="left:26.3px;margin-top:1px;">Training Material</span></div>
<div class="bb" style="left:335.0px;width:105.6px;"><svg class="a" style="left:4.5px;top:5.5px" width="20" height="18" viewBox="0 0 20 18"><path d="M10.4 3.6C8.6 0.6 3.4 0.8 2.6 5c-0.2 1.4 0.2 2.6 0.8 3.6M10.4 3.6C12.2 0.6 17.6 0.8 18 5c0.4 4.6-4.8 8-8.6 11" fill="none" stroke="#ececec" stroke-width="2.2" stroke-linecap="round"/><path d="M5 8v8.6M0.7 12.3h8.6" stroke="#ececec" stroke-width="2.9"/></svg><span class="a" style="left:26.4px;margin-top:1px;">System Health</span></div>
<div class="a" style="left:426.2px;top:532.0px;width:6.7px;height:6.9px;background:#e8a820"></div>
<div class="a" style="left:432.9px;top:532.0px;width:7.4px;height:6.9px;background:#ee1c1c"></div>
<div class="bb" style="left:446.7px;width:91.3px;"><svg class="a" style="left:7.4px;top:5.4px" width="14" height="18" viewBox="0 0 14 18"><rect x="1" y="2.8" width="12" height="14.4" fill="none" stroke="#ececec" stroke-width="1.5"/><rect x="4" y="0.6" width="6" height="3.6" fill="#ececec"/><path d="M3.6 7.6h6.8M3.6 10.4h6.8M3.6 13.2h6.8" stroke="#ececec" stroke-width="1.1"/></svg><span class="a" style="left:27.3px;margin-top:1px;">System Log</span></div>
<div class="bb" style="left:543.8px;width:56.9px;"><span class="a" style="left:4.6px;top:0.6px;font-size:25px;line-height:28px;font-weight:bold;color:#f0f0f0;letter-spacing:0;transform:scaleX(1.3);transform-origin:0 0">?</span><span class="a" style="left:27.8px;margin-top:1px;">Help</span></div>
<div class="bb" style="left:606.5px;width:66.0px;background:#1e1e1e;border:1px solid #2b2b2b;color:#474747"><svg class="a" style="left:5px;top:5.2px" width="16" height="17" viewBox="0 0 16 17"><path d="M0.6 0.6h7.8v15.8H0.6z" fill="#3a3a3a"/><path d="M9.6 7.2h2.6V5l3.4 3.5-3.4 3.5V9.8H9.6z" fill="#3a3a3a"/></svg><span class="a" style="left:25.9px;margin-top:1px;">Logout</span></div>
<div class="a" style="left:903.0px;top:531.4px;width:30.0px;height:28.4px;background:#1f1f1f"><svg class="a" style="left:7px;top:2px" width="17" height="24" viewBox="0 0 17 24"><rect x="5.2" y="0.4" width="6.8" height="15" rx="3.4" fill="#8fd08f"/><path d="M1 10.4v1.8a7.5 7.5 0 0 0 15 0v-1.8M8.5 19.6v3.2M5.6 23.3h5.8" fill="none" stroke="#8fd08f" stroke-width="1.5"/></svg></div>
<div class="a" style="left:939.0px;top:531.4px;width:146.8px;height:28.4px;border:1px solid #4c4c4c;background:#1c1c1c"></div>
<svg class="a" style="left:939px;top:531.5px" width="147" height="28" viewBox="0 0 147 28"><path d="M4 11.2h3.6l4.6-4v13.6l-4.6-4H4z" fill="#8c8c8c"/><path d="M13.8 10.8q1.4 3.2 0 6.4M15.8 9.8q2 4.2 0 8.4M17.8 8.8q2.6 5.2 0 10.4" fill="none" stroke="#8c8c8c" stroke-width="0.8"/><line x1="31.5" y1="1.8" x2="31.5" y2="5.6" stroke="#8a8a8a" stroke-width="0.8"/><line x1="42.0" y1="3.2" x2="42.0" y2="5.6" stroke="#8a8a8a" stroke-width="0.8"/><line x1="52.5" y1="3.2" x2="52.5" y2="5.6" stroke="#8a8a8a" stroke-width="0.8"/><line x1="63.1" y1="3.2" x2="63.1" y2="5.6" stroke="#8a8a8a" stroke-width="0.8"/><line x1="73.6" y1="3.2" x2="73.6" y2="5.6" stroke="#8a8a8a" stroke-width="0.8"/><line x1="84.1" y1="3.2" x2="84.1" y2="5.6" stroke="#8a8a8a" stroke-width="0.8"/><line x1="94.6" y1="3.2" x2="94.6" y2="5.6" stroke="#8a8a8a" stroke-width="0.8"/><line x1="105.1" y1="3.2" x2="105.1" y2="5.6" stroke="#8a8a8a" stroke-width="0.8"/><line x1="115.7" y1="3.2" x2="115.7" y2="5.6" stroke="#8a8a8a" stroke-width="0.8"/><line x1="126.2" y1="3.2" x2="126.2" y2="5.6" stroke="#8a8a8a" stroke-width="0.8"/><line x1="136.7" y1="1.8" x2="136.7" y2="5.6" stroke="#8a8a8a" stroke-width="0.8"/><rect x="31.5" y="14.2" width="105.2" height="3.8" fill="#343434"/><rect x="46.2" y="6" width="13" height="18.4" fill="#7e7e7e"/></svg>
<div class="a" style="left:1092.2px;top:531.4px;width:23.4px;height:28.4px;background:#2e2e2e"><svg class="a" style="left:3.6px;top:7.4px" width="14" height="14" viewBox="0 0 14 14"><path d="M4.6 4.4H1v8.6h8.6V9.4" fill="none" stroke="#f0f0f0" stroke-width="1.4"/><path d="M4.9 0.9h8.2v8.2h-8.2z" fill="none" stroke="#f0f0f0" stroke-width="1.4"/><path d="M6.4 7.6l4.6-4.6M7.6 2.8h3.6v3.6" fill="none" stroke="#f0f0f0" stroke-width="1.3"/></svg></div>
</body></html>
